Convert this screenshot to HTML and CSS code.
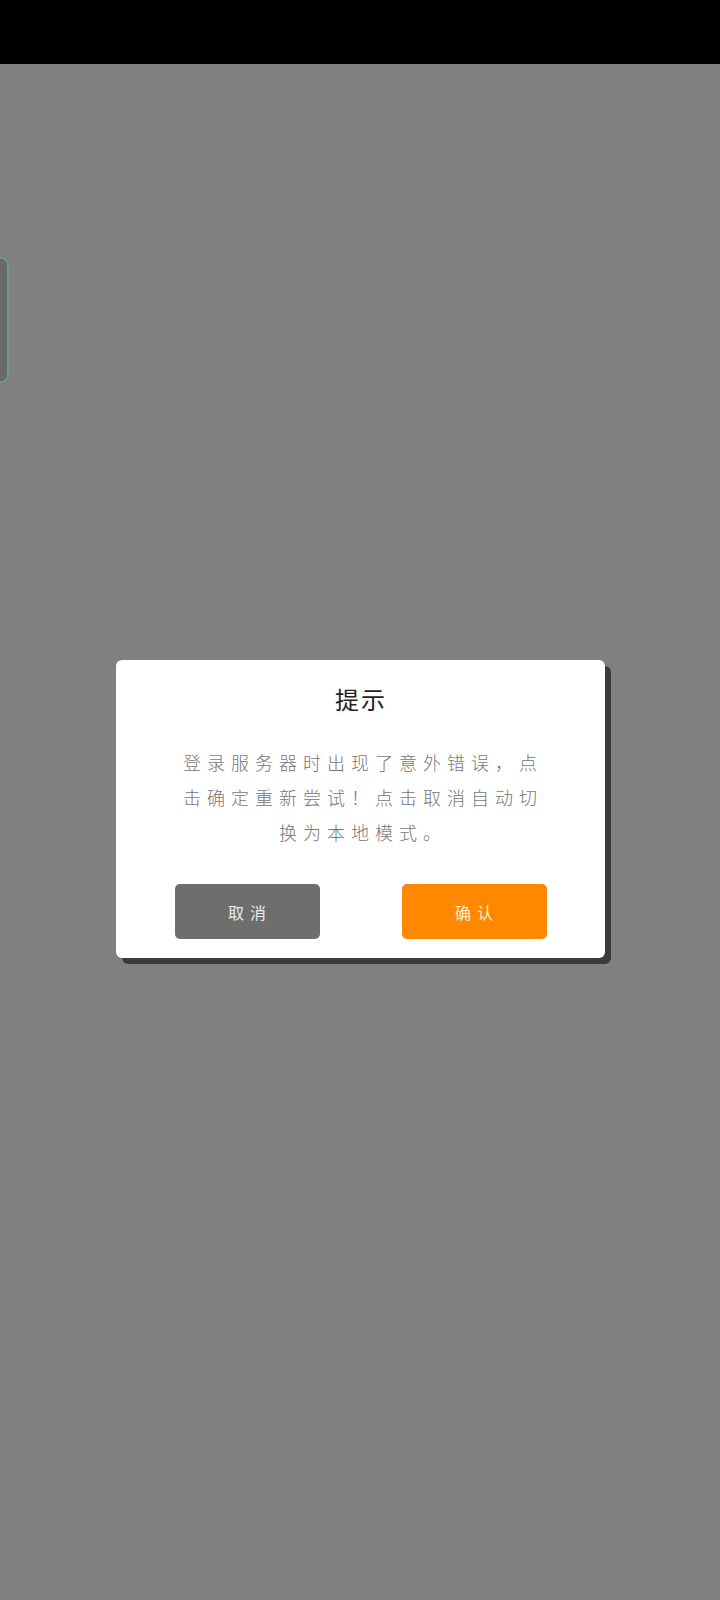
FILE: index.html
```html
<!DOCTYPE html>
<html lang="zh-CN">
<head>
<meta charset="utf-8">
<title>提示</title>
<link rel="stylesheet" href="styles.css">
</head>
<body>
<div class="page">
  <div class="status-bar"></div>
  <div class="side-tab"></div>
  <main class="stage">
    <div class="dialog">
      <h2 class="dialog-title">提示</h2>
      <p class="dialog-body">登录服务器时出现了意外错误，点击确定重新尝试！点击取消自动切换为本地模式。</p>
      <div class="dialog-actions">
        <button class="btn btn-cancel">取消</button>
        <button class="btn btn-confirm">确认</button>
      </div>
    </div>
  </main>
</div>
</body>
</html>
```
FILE: styles.css
```css
* { box-sizing: border-box; }
html, body {
  margin: 0;
  padding: 0;
  background: #808080;
}
body {
  font-family: "Noto Sans CJK SC", "Noto Sans", sans-serif;
}
.page {
  position: relative;
  width: 720px;
  min-height: 1600px;
  background: #808080;
}
.status-bar {
  height: 64px;
  background: #000;
}
.side-tab {
  position: absolute;
  left: -10px;
  top: 257px;
  width: 19px;
  height: 126px;
  background: #6a6868;
  border: 2px solid #6f9888;
  border-radius: 8px;
}
.stage {
  display: flex;
  justify-content: center;
  padding-top: 596px;
}
.dialog {
  width: 489px;
  background: #fff;
  border-radius: 6px;
  box-shadow: 6px 6px 0 #3b3b3b;
  padding: 23px 0 19px;
  display: flex;
  flex-direction: column;
  align-items: center;
}
.dialog-title {
  margin: 0;
  font-size: 24px;
  line-height: 32px;
  font-weight: 400;
  color: #222;
  letter-spacing: 2px;
  text-indent: 2px;
}
.dialog-body {
  margin: 30px 0 0;
  width: 376px;
  padding-left: 6px;
  font-size: 18px;
  line-height: 35px;
  letter-spacing: 6px;
  color: #777;
  text-align: center;
  font-weight: 300;
}
.dialog-actions {
  margin-top: 34px;
  width: 100%;
  padding: 0 58px 0 59px;
  display: flex;
  justify-content: space-between;
}
.btn {
  width: 145px;
  height: 55px;
  border: none;
  border-radius: 5px;
  font-family: "Noto Sans CJK SC", "Noto Sans", sans-serif;
  font-size: 16px;
  letter-spacing: 6px;
  text-indent: 6px;
  padding: 0;
}
.btn-cancel {
  background: #6e6e6e;
  color: #eaeaea;
}
.btn-confirm {
  background: #ff8800;
  color: #fff0dc;
}
```
